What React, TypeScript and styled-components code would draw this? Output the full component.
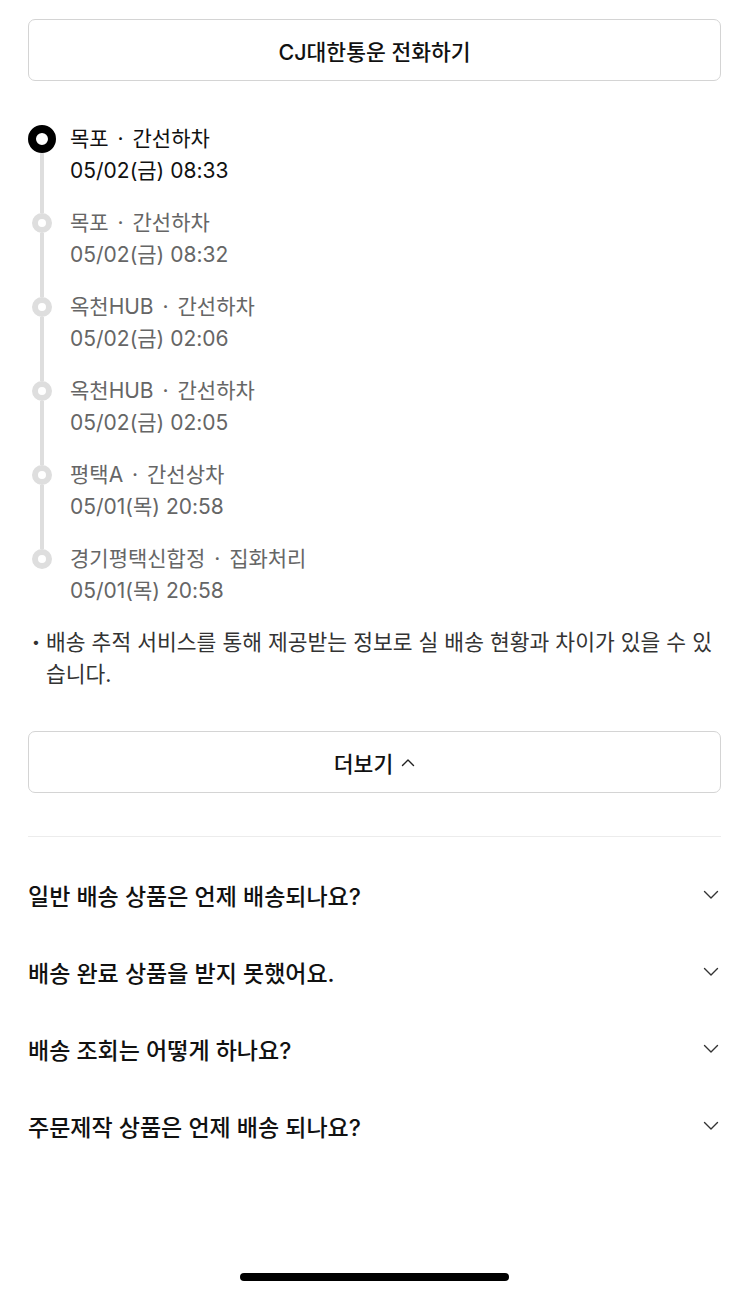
import styled, { createGlobalStyle } from 'styled-components';

const GlobalStyle = createGlobalStyle`
  * { box-sizing: border-box; }
  body {
    margin: 0;
    background: #fff;
    font-family: Inter, "Noto Sans CJK KR", "Noto Sans", sans-serif;
    color: #111;
  }
`;

type Track = { place: string; status: string; time: string };

const TRACKS: Track[] = [
  { place: '목포', status: '간선하차', time: '05/02(금) 08:33' },
  { place: '목포', status: '간선하차', time: '05/02(금) 08:32' },
  { place: '옥천HUB', status: '간선하차', time: '05/02(금) 02:06' },
  { place: '옥천HUB', status: '간선하차', time: '05/02(금) 02:05' },
  { place: '평택A', status: '간선상차', time: '05/01(목) 20:58' },
  { place: '경기평택신합정', status: '집화처리', time: '05/01(목) 20:58' },
];

const FAQS = [
  '일반 배송 상품은 언제 배송되나요?',
  '배송 완료 상품을 받지 못했어요.',
  '배송 조회는 어떻게 하나요?',
  '주문제작 상품은 언제 배송 되나요?',
];

const ChevronDown = () => (
  <svg width="16" height="10" viewBox="0 0 16 10" fill="none">
    <path d="M1.5 1.5L8 8L14.5 1.5" stroke="#333" strokeWidth="1.4" strokeLinecap="round" strokeLinejoin="round" />
  </svg>
);

const ChevronUp = () => (
  <svg width="14" height="9" viewBox="0 0 14 9" fill="none">
    <path d="M1.5 7.5L7 2L12.5 7.5" stroke="#222" strokeWidth="1.4" strokeLinecap="round" strokeLinejoin="round" />
  </svg>
);

export default function App() {
  return (
    <>
      <GlobalStyle />
      <Page>
        <OutlineButton>CJ대한통운 전화하기</OutlineButton>

        <Timeline>
          {TRACKS.map((t, i) => (
            <TrackItem key={i} $last={i === TRACKS.length - 1}>
              <Marker>
                <LineSegment $hidden={i === 0} $size={i === 0 ? 28 : 20} />
                <Dot $active={i === 0} />
                {i !== TRACKS.length - 1 && <LineFill />}
              </Marker>
              <TrackText $active={i === 0}>
                <TrackLine>
                  {t.place} <Sep>·</Sep> {t.status}
                </TrackLine>
                <TrackLine>{t.time}</TrackLine>
              </TrackText>
            </TrackItem>
          ))}
        </Timeline>

        <Notice>
          <Bullet>•</Bullet>
          <NoticeText>배송 추적 서비스를 통해 제공받는 정보로 실 배송 현황과 차이가 있을 수 있습니다.</NoticeText>
        </Notice>

        <OutlineButton $gapTop={41}>
          더보기 <ChevronUp />
        </OutlineButton>

        <Divider />

        <FaqList>
          {FAQS.map((q) => (
            <FaqRow key={q}>
              <FaqTitle>{q}</FaqTitle>
              <ChevronDown />
            </FaqRow>
          ))}
        </FaqList>
      </Page>
      <HomeIndicator />
    </>
  );
}

const Page = styled.div`
  display: flex;
  flex-direction: column;
  padding: 19px 29px 0 28px;
  min-height: 1296px;
`;

const OutlineButton = styled.button<{ $gapTop?: number }>`
  display: flex;
  align-items: center;
  justify-content: center;
  gap: 8px;
  width: 100%;
  height: 62px;
  margin-top: ${({ $gapTop }) => $gapTop ?? 0}px;
  border: 1.5px solid #d4d4d4;
  border-radius: 7px;
  background: #fff;
  font-family: inherit;
  font-size: 21.5px;
  font-weight: 500;
  color: #111;
  cursor: pointer;
`;

const Timeline = styled.ol`
  list-style: none;
  margin: 42px 0 0;
  padding: 0;
`;

const TrackItem = styled.li<{ $last: boolean }>`
  display: flex;
  gap: 14px;
  padding-bottom: ${({ $last }) => ($last ? 0 : 20)}px;
  &:not(:last-child) > div:first-child {
    margin-bottom: -20px;
  }
`;

const Marker = styled.div`
  display: flex;
  flex-direction: column;
  align-items: center;
  width: 28px;
  flex-shrink: 0;
`;

const LineSegment = styled.div<{ $hidden: boolean; $size: number }>`
  width: 4px;
  height: ${({ $size }) => 16 - $size / 2}px;
  flex-shrink: 0;
  background: ${({ $hidden }) => ($hidden ? 'transparent' : '#dedede')};
`;

const LineFill = styled.div`
  width: 4px;
  flex: 1;
  background: #dedede;
`;

const Dot = styled.div<{ $active: boolean }>`
  flex-shrink: 0;
  width: ${({ $active }) => ($active ? 28 : 20)}px;
  height: ${({ $active }) => ($active ? 28 : 20)}px;
  border-radius: 50%;
  background: #fff;
  border: ${({ $active }) => ($active ? '8.5px solid #000' : '6px solid #dedede')};
`;

const TrackText = styled.div<{ $active: boolean }>`
  display: flex;
  flex-direction: column;
  color: ${({ $active }) => ($active ? '#111' : '#666')};
  font-size: 21px;
  line-height: 32px;
`;

const TrackLine = styled.span``;

const Sep = styled.span`
  margin: 0 3px;
`;

const Notice = styled.div`
  display: flex;
  gap: 5px;
  margin-top: 19px;
  padding-left: 4px;
  color: #333;
  font-size: 21.5px;
  line-height: 32px;
`;

const Bullet = styled.span`
  font-size: 14px;
  width: 9px;
  flex-shrink: 0;
`;

const NoticeText = styled.p`
  margin: 0;
`;

const Divider = styled.hr`
  margin: 43px 0 0;
  border: none;
  border-top: 1.5px solid #ececec;
`;

const FaqList = styled.div`
  display: flex;
  flex-direction: column;
  margin-top: 19px;
`;

const FaqRow = styled.div`
  display: flex;
  align-items: center;
  justify-content: space-between;
  height: 77px;
  padding-right: 2px;
`;

const FaqTitle = styled.span`
  font-size: 23px;
  font-weight: 500;
  color: #111;
`;

const HomeIndicator = styled.div`
  position: fixed;
  left: 240px;
  bottom: 15px;
  width: 269px;
  height: 8px;
  border-radius: 4px;
  background: #000;
`;
